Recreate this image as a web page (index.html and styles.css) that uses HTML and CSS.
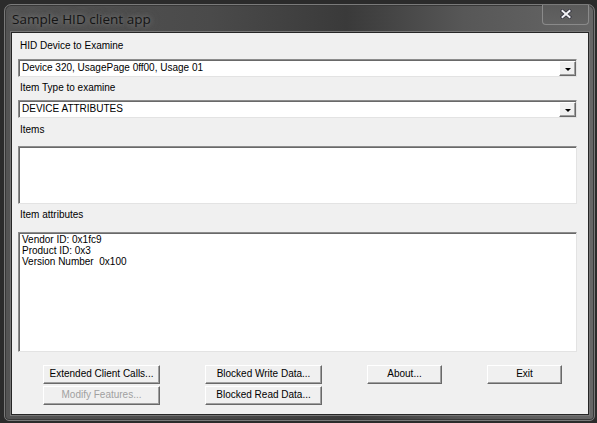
FILE: index.html
```html
<!DOCTYPE html>
<html>
<head>
<meta charset="utf-8">
<link rel="stylesheet" href="styles.css">
</head>
<body>
<div class="window">
  <div class="titlebar">
    <span class="title">Sample HID client app</span>
    <div class="close">
      <svg width="14" height="10" viewBox="0 0 14 10">
        <path d="M3.5 2 L10.5 8 M10.5 2 L3.5 8" stroke="#33333f" stroke-width="3.6" stroke-linecap="square"/>
        <path d="M3.5 2 L10.5 8 M10.5 2 L3.5 8" stroke="#f2f2f6" stroke-width="2" stroke-linecap="square"/>
      </svg>
    </div>
  </div>
  <div class="panel">
    <div class="label l1">HID Device to Examine</div>
    <div class="combo c1">
      <span class="combo-text">Device 320, UsagePage 0ff00, Usage 01</span>
      <div class="drop"><span class="arrow"></span></div>
    </div>
    <div class="label l2">Item Type to examine</div>
    <div class="combo c2">
      <span class="combo-text">DEVICE ATTRIBUTES</span>
      <div class="drop"><span class="arrow"></span></div>
    </div>
    <div class="label l3">Items</div>
    <div class="box items"></div>
    <div class="label l4">Item attributes</div>
    <div class="box attrs">
      <div>Vendor ID: 0x1fc9</div>
      <div>Product ID: 0x3</div>
      <div>Version Number&nbsp; 0x100</div>
    </div>
    <div class="buttons">
      <div class="col wide">
        <div class="btn">Extended Client Calls...</div>
        <div class="btn disabled">Modify Features...</div>
      </div>
      <div class="col wide">
        <div class="btn">Blocked Write Data...</div>
        <div class="btn">Blocked Read Data...</div>
      </div>
      <div class="col narrow">
        <div class="btn">About...</div>
      </div>
      <div class="col narrow">
        <div class="btn">Exit</div>
      </div>
    </div>
  </div>
</div>
</body>
</html>
```

FILE: styles.css
```css
html, body {
  margin: 0;
  padding: 0;
}
body {
  background: #2b2b2b;
  width: 597px;
  height: 423px;
  overflow: hidden;
  font-family: "Liberation Sans", Arial, sans-serif;
}
.window {
  margin: 4px 0 0 4px;
  width: 589px;
  height: 415px;
  border: 1px solid #7a7a7a;
  border-radius: 7px 7px 5px 5px;
  background: linear-gradient(90deg, #545454 0%, #4a4a4a 35%, #3a3a3a 58%, #575757 78%, #666 100%);
  box-shadow: inset 0 0 0 1px #383838;
  display: flex;
  flex-direction: column;
}
.titlebar {
  height: 27px;
  display: flex;
  align-items: flex-start;
  justify-content: space-between;
}
.title {
  margin: 5px 0 0 4px;
  padding: 0 3px;
  font-family: "Open Sans", "Noto Sans", sans-serif;
  font-size: 13.5px;
  line-height: 18px;
  color: #141414;
  text-shadow: 0 0 5px rgba(150,150,150,0.7), 0 0 10px rgba(140,140,140,0.6);
}
.close {
  width: 45px;
  height: 19px;
  margin-right: 5px;
  border: 1px solid #8a8a8a;
  border-top: none;
  border-radius: 0 0 4px 4px;
  background: linear-gradient(180deg, #5a5a5a, #626262);
  display: flex;
  align-items: center;
  justify-content: center;
}
.close svg {
  display: block;
  margin-top: -1px;
}
.panel {
  margin-left: 6px;
  border: 1px solid #262626;
  box-shadow: 0 0 0 1px #777;
  background: #f0f0f0;
  padding: 7px 0 0 6px;
  box-sizing: border-box;
  height: 383px;
  width: 578px;
  font-size: 10px;
  color: #000;
}
.label {
  height: 12px;
  line-height: 12px;
  padding-left: 2px;
}
.l2 { margin-top: 5px; }
.l3 { margin-top: 6px; }
.l4 { margin-top: 5px; }
.combo {
  width: 559px;
  height: 18px;
  box-sizing: border-box;
  background: #fff;
  border: 1px solid;
  border-color: #8c8c8c #e3e3e3 #e3e3e3 #8c8c8c;
  box-shadow: inset 1px 1px 0 #696969;
  display: flex;
  align-items: stretch;
}
.c1 { margin-top: 7px; }
.c2 { margin-top: 6px; }
.combo-text {
  flex: 1;
  padding-left: 3px;
  line-height: 16px;
}
.drop {
  width: 17px;
  margin-top: 1px;
  height: 15px;
  box-sizing: border-box;
  background: #f0f0f0;
  border: 1px solid;
  border-color: #fff #696969 #696969 #fff;
  box-shadow: inset -1px -1px 0 #a0a0a0;
  display: flex;
  align-items: center;
  justify-content: center;
}
.arrow {
  width: 0;
  height: 0;
  border-left: 3px solid transparent;
  border-right: 3px solid transparent;
  border-top: 3px solid #000;
  margin-top: 1px;
}
.box {
  width: 559px;
  box-sizing: border-box;
  background: #fff;
  border: 1px solid;
  border-color: #8c8c8c #e3e3e3 #e3e3e3 #8c8c8c;
  box-shadow: inset 1px 1px 0 #696969;
}
.items {
  margin-top: 10px;
  height: 58px;
}
.attrs {
  margin-top: 11px;
  height: 120px;
  padding: 1px 0 0 3px;
  line-height: 11px;
}
.buttons {
  margin-top: 13px;
  margin-left: 25px;
  display: flex;
  gap: 45px;
}
.col {
  display: flex;
  flex-direction: column;
  gap: 2px;
}
.wide { width: 117px; }
.narrow { width: 75px; }
.btn {
  height: 19px;
  box-sizing: border-box;
  background: #f0f0f0;
  border: 1px solid;
  border-color: #fff #696969 #696969 #fff;
  box-shadow: inset -1px -1px 0 #a0a0a0;
  text-align: center;
  line-height: 16px;
  color: #000;
}
.btn.disabled {
  color: #a0a0a0;
}
```
